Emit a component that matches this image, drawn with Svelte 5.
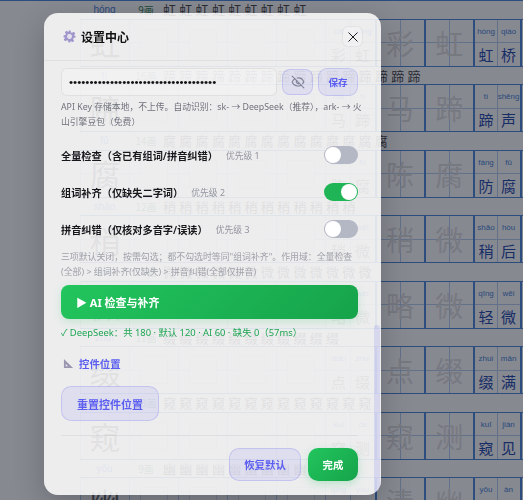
<script>
  // worksheet rows behind the dialog
  const sheet = [
    { py: 'hóng', ch: '虹', n: 9, a: ['cǎi', 'hóng', '彩', '虹'], b: ['hóng', 'qiáo', '虹', '桥'] },
    { py: 'tí', ch: '蹄', n: 16, a: ['mǎ', 'tí', '马', '蹄'], b: ['tí', 'shēng', '蹄', '声'] },
    { py: 'fǔ', ch: '腐', n: 14, a: ['chén', 'fǔ', '陈', '腐'], b: ['fáng', 'fǔ', '防', '腐'] },
    { py: 'shāo', ch: '稍', n: 12, a: ['shāo', 'wēi', '稍', '微'], b: ['shāo', 'hòu', '稍', '后'] },
    { py: 'wēi', ch: '微', n: 13, a: ['lüè', 'wēi', '略', '微'], b: ['qīng', 'wēi', '轻', '微'] },
    { py: 'zhuì', ch: '缀', n: 11, a: ['diǎn', 'zhuì', '点', '缀'], b: ['zhuì', 'mǎn', '缀', '满'] },
    { py: 'kuī', ch: '窥', n: 13, a: ['kuī', 'cè', '窥', '测'], b: ['kuī', 'jiàn', '窥', '见'] },
    { py: 'yōu', ch: '幽', n: 9, a: ['qīng', 'yōu', '清', '幽'], b: ['yōu', 'àn', '幽', '暗'] }
  ];

  let toggles = $state([
    { label: '全量检查（含已有组词/拼音纠错）', level: '优先级 1', on: false },
    { label: '组词补齐（仅缺失二字词）', level: '优先级 2', on: true },
    { label: '拼音纠错（仅核对多音字/误读）', level: '优先级 3', on: false }
  ]);
</script>

<div class="sheet">
  {#each sheet as row}
    <div class="head">
      <span class="head-py">{row.py}</span>
      <span class="head-n">{row.n}画</span>
      <span class="strokes">
        {#each Array(row.n) as _}<span>{row.ch}</span>{/each}
      </span>
    </div>
    <div class="grid">
      <div class="cell big first"><span>{row.ch}</span></div>
      {#each [1, 2, 3, 4] as _}
        <div class="cell"><i></i></div>
      {/each}
      <div class="cell word">
        <small>{row.a[0]}</small><small>{row.a[1]}</small><b>{row.a[2]}</b><b>{row.a[3]}</b>
      </div>
      <div class="cell big half"><span>{row.a[2]}</span></div>
      <div class="cell big half"><span>{row.a[3]}</span></div>
      <div class="cell word strong">
        <small>{row.b[0]}</small><small>{row.b[1]}</small><b>{row.b[2]}</b><b>{row.b[3]}</b>
      </div>
    </div>
  {/each}
</div>

<div class="scrim"></div>

<div class="modal">
  <header>
    <svg class="gear" width="13" height="13" viewBox="0 0 24 24">
      <path fill="#a096cc" fill-rule="evenodd" d="M10 1h4l.7 3.400 2.200.9 2.900-1.900 2.800 2.800-1.900 2.900.9 2.200L23 10v4l-3.400.7-.9 2.200 1.900 2.900-2.800 2.800-2.900-1.900-2.200.9L14 23h-4l-.7-3.400-2.200-.9-2.900 1.900-2.800-2.800 1.900-2.900-.9-2.200L1 14v-4l3.400-.7.9-2.200-1.900-2.900 2.800-2.800 2.900 1.900 2.200-.9zM12 7.500a4.500 4.500 0 1 0 0 9 4.500 4.500 0 0 0 0-9z"/>
      <circle cx="12" cy="12" r="3" fill="#e2deef"/>
    </svg>
    <h2>设置中心</h2>
    <button class="close" aria-label="关闭">
      <svg width="10" height="10" viewBox="0 0 10 10"><path d="M.5.5l9 9M9.500.5l-9 9" stroke="#1c1c22" stroke-width="1" fill="none"/></svg>
    </button>
  </header>

  <div class="body">
    <div class="key-row">
      <div class="key-input">••••••••••••••••••••••••••••••••••••</div>
      <button class="ghost eye" aria-label="显示">
        <svg width="14" height="14" viewBox="0 0 24 24" fill="none" stroke="#84859a" stroke-width="2" stroke-linecap="round" stroke-linejoin="round">
          <path d="M10.700 5.100A10.700 10.700 0 0 1 22 12a13 13 0 0 1-2.200 3M6.600 6.600A13.500 13.500 0 0 0 2 12a10.700 10.700 0 0 0 15.400 5.400"/>
          <path d="M9.900 9.900a3 3 0 0 0 4.200 4.200"/>
          <path d="M2 2l20 20"/>
        </svg>
      </button>
      <button class="ghost save">保存</button>
    </div>
    <p class="help">API Key 存储本地，不上传。自动识别：sk- → DeepSeek（推荐），ark- → 火山引擎豆包（免费）</p>

    <div class="toggles">
      {#each toggles as t}
        <div class="toggle-row">
          <span class="t-label">{t.label}</span>
          <span class="t-level">{t.level}</span>
          <button class="switch" class:on={t.on} aria-label={t.label} onclick={() => (t.on = !t.on)}></button>
        </div>
      {/each}
    </div>

    <p class="hint">三项默认关闭，按需勾选；都不勾选时等同"组词补齐"。作用域：全量检查(全部) &gt; 组词补齐(仅缺失) &gt; 拼音纠错(全部仅拼音)</p>

    <button class="run">▶ AI 检查与补齐</button>
    <p class="status">✓ DeepSeek：共 180 · 默认 120 · AI 60 · 缺失 0（57ms）</p>

    <div class="section">
      <svg width="11" height="11" viewBox="0 0 12 12">
        <path fill="#9a98b0" fill-rule="evenodd" d="M1 1l10 10H1zM3 6.500V9h2.500z"/>
      </svg>
      <span>控件位置</span>
    </div>
    <button class="ghost reset">重置控件位置</button>
  </div>

  <footer>
    <button class="ghost restore">恢复默认</button>
    <button class="done">完成</button>
  </footer>

  <div class="thumb"></div>
</div>

<style>
  :global(body) {
    margin: 0;
    background: #fff;
    overflow: hidden;
    font-family: "Noto Sans", "Noto Sans CJK SC", sans-serif;
  }

  /* worksheet */
  .sheet {
    width: 523px;
    height: 500px;
    overflow: hidden;
    padding-left: 80px;
    box-sizing: border-box;
    border-top: 1px solid #4a86d8;
    font-family: "Noto Sans CJK SC", sans-serif;
  }
  .head {
    height: 17.500px;
    display: flex;
    align-items: center;
    white-space: nowrap;
    width: 443px;
    overflow: hidden;
    color: #3f7ed2;
    font-size: 10px;
  }
  .head-py {
    width: 49px;
    text-align: center;
    font-family: "Liberation Sans", sans-serif;
    flex: none;
  }
  .head-n {
    width: 34px;
    text-align: center;
    flex: none;
    color: #2e7d4f;
  }
  .strokes {
    display: flex;
    color: #444;
    font-size: 13px;
    line-height: 17px;
  }
  .strokes span {
    width: 16.300px;
    flex: none;
  }
  .grid {
    display: grid;
    grid-template-columns: repeat(9, 49.100px);
    border-top: 1px solid #4a86d8;
    border-bottom: 1px solid #4a86d8;
    height: 46px;
  }
  .cell {
    position: relative;
    border-left: 1px solid #b4cdee;
    display: flex;
    align-items: center;
    justify-content: center;
    background: linear-gradient(#b4cdee, #b4cdee) center / 100% 1px no-repeat;
    overflow: hidden;
  }
  .cell i {
    width: 26px;
    height: 26px;
    border: 1px solid #d8e3f3;
    background: #fff;
  }
  .big {
    font-size: 28px;
    color: #dedede;
  }
  .first {
    font-size: 31px;
    color: #666;
  }
  .half {
    background:
      linear-gradient(#b4cdee, #b4cdee) center / 100% 1px no-repeat,
      linear-gradient(#b4cdee, #b4cdee) center / 1px 100% no-repeat;
    border-left: 2px solid #4a86d8;
  }
  .word {
    display: grid;
    grid-template-columns: 1fr 1fr;
    grid-template-rows: 1fr 1fr;
    justify-items: center;
    align-items: center;
    background: linear-gradient(#b4cdee, #b4cdee) center / 100% 1px no-repeat,
      linear-gradient(#b4cdee, #b4cdee) center / 1px 100% no-repeat;
  }
  .word small {
    font-size: 8px;
    font-family: "Liberation Sans", sans-serif;
    color: #3f7ed2;
  }
  .word b {
    font-weight: 400;
    font-size: 15px;
    line-height: 1;
    color: #777;
  }
  .strong {
    border-left: 2px solid #4a86d8;
    border-right: 2px solid #4a86d8;
  }
  .strong b {
    color: #1c46a8;
  }

  .scrim {
    position: fixed;
    inset: 0;
    background: rgba(15, 20, 35, 0.5);
  }

  /* dialog */
  .modal {
    position: fixed;
    left: 44px;
    top: 13px;
    width: 337px;
    height: 482px;
    border-radius: 14px;
    background: rgba(255, 255, 255, 0.85);
    box-shadow: 0 10px 30px rgba(0, 0, 0, 0.22);
    display: flex;
    flex-direction: column;
    overflow: hidden;
  }
  button {
    font-family: inherit;
    cursor: pointer;
    padding: 0;
  }
  header {
    height: 48px;
    flex: none;
    box-sizing: border-box;
    padding: 0 18px 0 19px;
    display: flex;
    align-items: center;
    gap: 5px;
    border-bottom: 1px solid rgba(0, 0, 0, 0.05);
  }
  h2 {
    margin: 0;
    flex: 1;
    font-size: 12px;
    font-weight: 600;
    color: #111;
  }
  .close {
    width: 21px;
    height: 21px;
    border: 1px solid rgba(0, 0, 0, 0.06);
    border-radius: 6px;
    background: rgba(255, 255, 255, 0.2);
    display: flex;
    align-items: center;
    justify-content: center;
  }
  .body {
    flex: 1;
    padding: 7px 23px 0 17px;
    min-height: 0;
  }
  .key-row {
    display: flex;
    align-items: center;
    gap: 5px;
  }
  .key-input {
    width: 216px;
    height: 28px;
    box-sizing: border-box;
    border: 1px solid rgba(0, 0, 0, 0.07);
    border-radius: 6px;
    background: rgba(255, 255, 255, 0.25);
    padding-left: 7px;
    font-family: "Liberation Sans", sans-serif;
    font-size: 11.700px;
    line-height: 26px;
    color: #111;
    white-space: nowrap;
    overflow: hidden;
  }
  .ghost {
    border: 1px solid rgba(99, 102, 241, 0.22);
    background: rgba(99, 102, 241, 0.11);
    color: #5b5ef0;
    font-weight: 600;
  }
  .eye {
    width: 31px;
    height: 26px;
    border-radius: 8px;
    display: flex;
    align-items: center;
    justify-content: center;
  }
  .save {
    width: 40px;
    height: 28px;
    border-radius: 9px;
    font-size: 9.600px;
  }
  .help {
    margin: 4px -6px 0 0;
    font-size: 8.800px;
    line-height: 15px;
    color: #70727c;
  }
  .toggles {
    margin-top: 16px;
    display: flex;
    flex-direction: column;
    gap: 19px;
  }
  .toggle-row {
    height: 18px;
    display: flex;
    align-items: center;
    gap: 8px;
  }
  .t-label {
    font-size: 10.200px;
    font-weight: 600;
    color: #17171c;
  }
  .t-level {
    flex: 1;
    font-size: 8.800px;
    color: #92949e;
  }
  .switch {
    width: 34px;
    height: 18px;
    border: none;
    border-radius: 9px;
    background: #b4b7c4;
    position: relative;
    flex: none;
  }
  .switch::after {
    content: "";
    position: absolute;
    left: 1px;
    top: 1px;
    width: 16px;
    height: 16px;
    border-radius: 50%;
    background: #fff;
  }
  .switch.on {
    background: #1fb557;
  }
  .switch.on::after {
    left: 17px;
  }
  .hint {
    margin: 10.500px 0 0;
    font-size: 8.900px;
    line-height: 15px;
    color: #a0a2aa;
  }
  .run {
    display: block;
    margin-top: 6.500px;
    width: 297px;
    height: 34px;
    border: none;
    border-radius: 8px;
    background: linear-gradient(135deg, #22c55e, #16a34a);
    box-shadow: 0 3px 10px rgba(34, 197, 94, 0.2);
    color: #fff;
    font-size: 11px;
    font-weight: 700;
    text-align: left;
    padding-left: 15px;
  }
  .status {
    margin: 5.500px 0 0;
    font-size: 9.400px;
    line-height: 15px;
    color: #1ea653;
  }
  .section {
    margin-top: 14.500px;
    display: flex;
    align-items: center;
    gap: 5px;
    height: 18px;
    padding-left: 2px;
    font-size: 10.400px;
    font-weight: 600;
    color: #5b5ef0;
  }
  .reset {
    display: block;
    margin-top: 14px;
    width: 98px;
    height: 35px;
    border-radius: 10px;
    font-size: 11px;
  }
  footer {
    flex: none;
    height: 60px;
    box-sizing: border-box;
    margin: 0 23px 0 17px;
    padding-top: 12px;
    border-top: 1px solid rgba(0, 0, 0, 0.05);
    display: flex;
    justify-content: flex-end;
    align-items: flex-start;
    gap: 7px;
  }
  .restore {
    width: 72px;
    height: 33px;
    border-radius: 10px;
    font-size: 10.400px;
  }
  .done {
    width: 50px;
    height: 33px;
    border: none;
    border-radius: 10px;
    background: linear-gradient(135deg, #22c55e, #16a34a);
    box-shadow: 0 3px 8px rgba(34, 197, 94, 0.25);
    color: #fff;
    font-size: 10.400px;
    font-weight: 600;
  }
  .thumb {
    position: absolute;
    right: 1px;
    top: 312px;
    bottom: 0;
    width: 6px;
    border-radius: 3px;
    background: rgba(99, 102, 241, 0.16);
  }
</style>
